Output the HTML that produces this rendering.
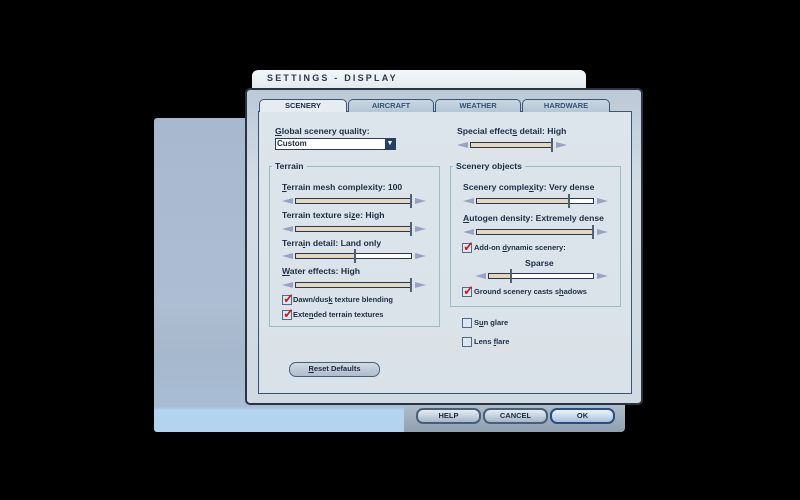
<!DOCTYPE html>
<html><head><style>
*{margin:0;padding:0;box-sizing:border-box}
body{width:800px;height:500px;background:#000;position:relative;overflow:hidden;font-family:"Liberation Sans",sans-serif;font-weight:bold;color:#1c2c44}
.a{position:absolute}
.t{position:absolute;font-size:8.6px;white-space:nowrap}
.tab{position:absolute;top:99px;height:13px;border:1px solid #3c5474;border-bottom:none;border-radius:5px 5px 0 0;background:linear-gradient(#c9d7e2,#b4c6d6);font-size:7.5px;text-align:center;line-height:12px;color:#34547a}
.trk{position:absolute;height:6px;border:1px solid #283850;background:#fff}
.fill{position:absolute;left:0;top:0;bottom:0;background:#e6d6bc}
.thumb{position:absolute;top:-5px;width:2px;height:14px;border-left:1px solid #506078;border-right:1px solid #506078;background:#dde}
.tl,.tr{position:absolute;width:0;height:0;border-top:3px solid transparent;border-bottom:3px solid transparent}
.tl{border-right:11px solid #9aa2c4}
.tr{border-left:11px solid #9aa2c4}
.cb{position:absolute;width:10px;height:10px;border:1px solid #506a88;background:#dbe6ee}
.cb.on::after{content:"✓";position:absolute;left:0px;top:-5px;color:#e01010;font-size:13px;font-weight:bold}
.btn{position:absolute;height:16px;border:2px solid #4a5e78;border-radius:7px;background:linear-gradient(#e4ecf2,#a8b8c8);font-size:7.5px;text-align:center;line-height:12px}
.grp{position:absolute;border:1px solid #9cbcc0}
u{text-decoration:underline}
</style></head><body>
<div class="a" style="left:154px;top:118px;width:256px;height:314px;border-radius:3px;background:linear-gradient(#a8b8cf 0%,#adbdd2 60%,#a6b8cb 75%,#a9bdd6 92%,#b4d4f0 93%,#b2d2ee 100%)"></div>
<div class="a" style="left:404px;top:400px;width:221px;height:32px;background:linear-gradient(#b5c3cf,#8fa0b2);border-radius:0 0 4px 0"></div>
<div class="a" style="left:252px;top:70px;width:334px;height:22px;border-radius:6px 6px 0 0;background:linear-gradient(#f4f7f8,#dfe7ec)"></div>
<div class="t" style="left:267px;top:73px;font-size:9px;letter-spacing:2.2px;color:#2a3a4c">SETTINGS - DISPLAY</div>
<div class="a" style="left:245px;top:88px;width:398px;height:317px;border:2px solid #2a3444;border-radius:5px;background:linear-gradient(#bccad6,#d2dce4 30%,#d0dae2)"></div>
<div class="a" style="left:258px;top:111px;width:374px;height:283px;border:1px solid #3c5474;background:linear-gradient(#dce5eb,#d9e2e8)"></div>
<div class="tab" style="left:259px;width:88px;background:#e6edf2;height:13px;color:#1c2c44">SCENERY</div>
<div class="tab" style="left:348px;width:86px">AIRCRAFT</div>
<div class="tab" style="left:435px;width:86px">WEATHER</div>
<div class="tab" style="left:522px;width:88px">HARDWARE</div>

<div class="t" style="left:275px;top:126px"><u>G</u>lobal scenery quality:</div>
<div class="a" style="left:275px;top:138px;width:121px;height:12px;border:1px solid #27405e;background:#fff"></div>
<div class="t" style="left:277px;top:139px;font-size:8px">Custom</div>
<div class="a" style="left:385px;top:139px;width:10px;height:10px;background:#27405e;color:#fff;font-size:7px;text-align:center;line-height:10px">▼</div>

<div class="t" style="left:457px;top:126px">Special effect<u>s</u> detail: High</div>
<div class="tl" style="left:457px;top:142px"></div><div class="trk" style="left:470px;top:142px;width:83px"><div class="fill" style="width:81px"></div><div class="thumb" style="left:80px"></div></div><div class="tr" style="left:556px;top:142px"></div>

<div class="grp" style="left:269px;top:166px;width:171px;height:161px"></div>
<div class="t" style="left:272px;top:161px;background:#dbe4ea;padding:0 3px">Terrain</div>
<div class="grp" style="left:450px;top:166px;width:171px;height:141px"></div>
<div class="t" style="left:453px;top:161px;background:#dbe4ea;padding:0 3px">Scenery objects</div>

<div class="t" style="left:282px;top:182px"><u>T</u>errain mesh complexity: 100</div>
<div class="tl" style="left:282px;top:198px"></div><div class="trk" style="left:295px;top:198px;width:117px"><div class="fill" style="width:115px"></div><div class="thumb" style="left:114px"></div></div><div class="tr" style="left:415px;top:198px"></div>
<div class="t" style="left:282px;top:210px">Terrain texture si<u>z</u>e: High</div>
<div class="tl" style="left:282px;top:226px"></div><div class="trk" style="left:295px;top:226px;width:117px"><div class="fill" style="width:115px"></div><div class="thumb" style="left:114px"></div></div><div class="tr" style="left:415px;top:226px"></div>
<div class="t" style="left:282px;top:238px">Terra<u>i</u>n detail: Land only</div>
<div class="tl" style="left:282px;top:253px"></div><div class="trk" style="left:295px;top:253px;width:117px"><div class="fill" style="width:59px"></div><div class="thumb" style="left:58px"></div></div><div class="tr" style="left:415px;top:253px"></div>
<div class="t" style="left:282px;top:266px"><u>W</u>ater effects: High</div>
<div class="tl" style="left:282px;top:282px"></div><div class="trk" style="left:295px;top:282px;width:117px"><div class="fill" style="width:115px"></div><div class="thumb" style="left:114px"></div></div><div class="tr" style="left:415px;top:282px"></div>
<div class="cb on" style="left:282px;top:295px"></div><div class="t" style="left:293px;top:295px;font-size:7.5px">Dawn/dus<u>k</u> texture blending</div>
<div class="cb on" style="left:282px;top:310px"></div><div class="t" style="left:293px;top:310px;font-size:7.5px">Exte<u>n</u>ded terrain textures</div>

<div class="t" style="left:463px;top:182px">Scenery comple<u>x</u>ity: Very dense</div>
<div class="tl" style="left:463px;top:198px"></div><div class="trk" style="left:476px;top:198px;width:118px"><div class="fill" style="width:92px"></div><div class="thumb" style="left:91px"></div></div><div class="tr" style="left:597px;top:198px"></div>
<div class="t" style="left:463px;top:213px"><u>A</u>utogen density: Extremely dense</div>
<div class="tl" style="left:463px;top:229px"></div><div class="trk" style="left:476px;top:229px;width:118px"><div class="fill" style="width:116px"></div><div class="thumb" style="left:115px"></div></div><div class="tr" style="left:597px;top:229px"></div>
<div class="cb on" style="left:462px;top:243px"></div><div class="t" style="left:474px;top:243px;font-size:7.5px">Add-on <u>d</u>ynamic scenery:</div>
<div class="t" style="left:525px;top:258px">Sparse</div>
<div class="tl" style="left:475px;top:273px"></div><div class="trk" style="left:488px;top:273px;width:106px"><div class="fill" style="width:22px"></div><div class="thumb" style="left:21px"></div></div><div class="tr" style="left:597px;top:273px"></div>
<div class="cb on" style="left:462px;top:287px"></div><div class="t" style="left:474px;top:287px;font-size:7.5px">Ground scenery casts s<u>h</u>adows</div>

<div class="cb" style="left:462px;top:318px"></div><div class="t" style="left:474px;top:318px;font-size:7.5px">S<u>u</u>n glare</div>
<div class="cb" style="left:462px;top:337px"></div><div class="t" style="left:474px;top:337px;font-size:7.5px">Lens <u>f</u>lare</div>

<div class="btn" style="left:289px;top:362px;width:91px;height:15px;border-width:1px;background:linear-gradient(#d0dae4,#aebccb)"><u>R</u>eset Defaults</div>
<div class="btn" style="left:416px;top:408px;width:65px">HELP</div>
<div class="btn" style="left:483px;top:408px;width:65px">CANCEL</div>
<div class="btn" style="left:550px;top:408px;width:65px;border-color:#2a4e80;background:linear-gradient(#eef4fa,#a8c2de)">OK</div>
</body></html>
